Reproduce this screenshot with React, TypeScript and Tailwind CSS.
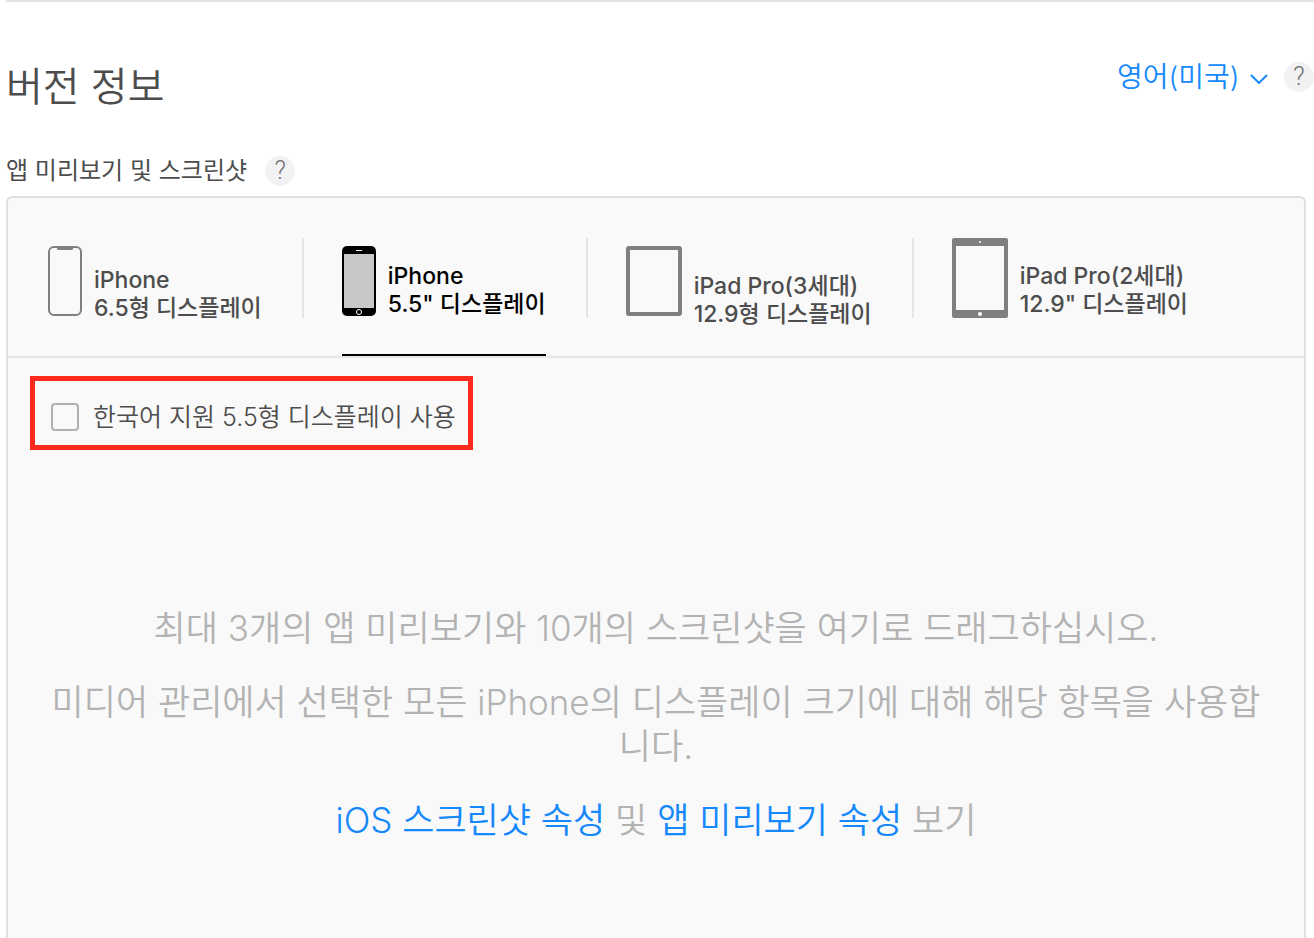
import { useState } from "react";
import type { ReactNode } from "react";

type Tab = {
  id: string;
  name: string;
  size: string;
  icon: ReactNode;
  iconClass: string;
  textClass: string;
};

const languages = ["영어(미국)", "한국어"];

const tabs: Tab[] = [
  {
    id: "iphone-65",
    name: "iPhone",
    size: "6.5형 디스플레이",
    iconClass: "mt-2",
    textClass: "pt-7",
    icon: (
      <svg width="34" height="70" viewBox="0 0 34 70" fill="none" aria-hidden="true">
        <rect x="1" y="1" width="32" height="68" rx="5" stroke="#7f7f7f" strokeWidth="2" />
        <path d="M9 1h16v1.5q0 1.5-1.5 1.5h-13Q9 4 9 2.500z" fill="#7f7f7f" />
      </svg>
    ),
  },
  {
    id: "iphone-55",
    name: "iPhone",
    size: "5.5\" 디스플레이",
    iconClass: "mt-2",
    textClass: "pt-6",
    icon: (
      <svg width="34" height="70" viewBox="0 0 34 70" fill="none" aria-hidden="true">
        <rect width="34" height="70" rx="5" fill="#000" />
        <rect x="2" y="8" width="30" height="54" fill="#c8c8c8" />
        <rect x="14" y="4" width="6" height="1" fill="#fff" />
        <circle cx="17" cy="66" r="2.500" stroke="#fff" />
      </svg>
    ),
  },
  {
    id: "ipad-3",
    name: "iPad Pro(3세대)",
    size: "12.9형 디스플레이",
    iconClass: "mt-2",
    textClass: "pt-[34px]",
    icon: (
      <svg width="56" height="70" viewBox="0 0 56 70" fill="none" aria-hidden="true">
        <rect x="2" y="2" width="52" height="66" rx="1" stroke="#7f7f7f" strokeWidth="4" />
      </svg>
    ),
  },
  {
    id: "ipad-2",
    name: "iPad Pro(2세대)",
    size: "12.9\" 디스플레이",
    iconClass: "",
    textClass: "pt-6",
    icon: (
      <svg width="56" height="80" viewBox="0 0 56 80" fill="none" aria-hidden="true">
        <rect width="56" height="80" rx="2" fill="#7f7f7f" />
        <rect x="4" y="8" width="48" height="64" fill="#f9f9f9" />
        <circle cx="28" cy="4" r="1" fill="#fff" />
        <circle cx="28" cy="76" r="2" fill="#fff" />
      </svg>
    ),
  },
];

function HelpButton({ label }: { label: string }) {
  return (
    <button
      type="button"
      aria-label={label}
      className="flex size-[30px] shrink-0 items-center justify-center rounded-full bg-[#f2f2f4] font-[Roboto] text-[25px] font-light text-[#707070]"
    >
      ?
    </button>
  );
}

export default function App() {
  const [active, setActive] = useState("iphone-55");
  const [useKorean, setUseKorean] = useState(false);

  return (
    <main
      lang="ko"
      className="flex min-h-screen flex-col bg-white pl-1.5 font-[Inter,'Noto_Sans_CJK_KR',sans-serif] text-[#4d4d4d]"
    >
      {/* Header */}
      <header className="flex items-start justify-between border-t-2 border-[#e3e3e3] pt-[60px]">
        <h1 className="text-[40px] leading-[50px] font-[350]">버전 정보</h1>
        <div className="flex items-center gap-4">
          <div className="relative flex items-center">
            <select
              aria-label="언어"
              className="appearance-none bg-transparent pr-7 text-[28px] leading-[30px] font-[350] text-[#1588fb]"
            >
              {languages.map((language) => (
                <option key={language}>{language}</option>
              ))}
            </select>
            <svg
              className="pointer-events-none absolute right-0"
              width="18"
              height="14"
              viewBox="0 0 18 14"
              fill="none"
              aria-hidden="true"
            >
              <path d="M1 5l8 8 8-8" stroke="#1588fb" strokeWidth="2" />
            </svg>
          </div>
          <HelpButton label="버전 정보 도움말" />
        </div>
      </header>

      <div className="mt-11 flex items-center gap-[18px]">
        <h2 className="text-2xl leading-[28px]">앱 미리보기 및 스크린샷</h2>
        <HelpButton label="스크린샷 도움말" />
      </div>

      <section className="mt-2.5 mr-2 flex-1 rounded-t-md border-2 border-b-0 border-[#dfdfdf] bg-[#f9f9f9]">
        {/* Devices */}
        <div role="tablist" className="flex border-b-2 border-[#e5e5e5] px-10 pt-10">
          {tabs.map((tab, i) => (
            <div key={tab.id} className="flex items-start">
              {i > 0 && <div className="mr-[38px] ml-10 h-20 w-0.5 bg-[#e5e5e5]" />}
              <button
                type="button"
                role="tab"
                aria-selected={active === tab.id}
                onClick={() => setActive(tab.id)}
                className={`flex h-[118px] items-start gap-3 border-b-2 text-left text-[23px] leading-7 font-medium whitespace-nowrap ${
                  active === tab.id ? "border-black text-black" : "border-transparent"
                }`}
              >
                <span className={tab.iconClass}>{tab.icon}</span>
                <span className={tab.textClass}>
                  {tab.name}
                  <br />
                  {tab.size}
                </span>
              </button>
            </div>
          ))}
        </div>

        <label className="mt-[18px] ml-[22px] inline-flex items-center gap-3.5 border-[5px] border-[#ff2a1c] pt-[22px] pr-3 pb-3.5 pl-4 text-[25px] leading-[28px] font-[350]">
          <input
            type="checkbox"
            checked={useKorean}
            onChange={(e) => setUseKorean(e.target.checked)}
            className="size-7 appearance-none rounded-sm border-2 border-[#b0b0b0] bg-[#f9f9f9] checked:bg-[#1588fb]"
          />
          한국어 지원 5.5형 디스플레이 사용
        </label>

        {/* Drop zone */}
        <div className="mt-[156px] space-y-[30px] px-10 text-center text-[35px] leading-[44px] font-[350] break-all text-[#b3b3b3]">
          <p>최대 3개의 앱 미리보기와 10개의 스크린샷을 여기로 드래그하십시오.</p>
          <p>미디어 관리에서 선택한 모든 iPhone의 디스플레이 크기에 대해 해당 항목을 사용합니다.</p>
          <p>
            <a href="#screenshots" className="text-[#1588fb]">iOS 스크린샷 속성</a> 및{" "}
            <a href="#previews" className="text-[#1588fb]">앱 미리보기 속성</a> 보기
          </p>
        </div>
      </section>
    </main>
  );
}
